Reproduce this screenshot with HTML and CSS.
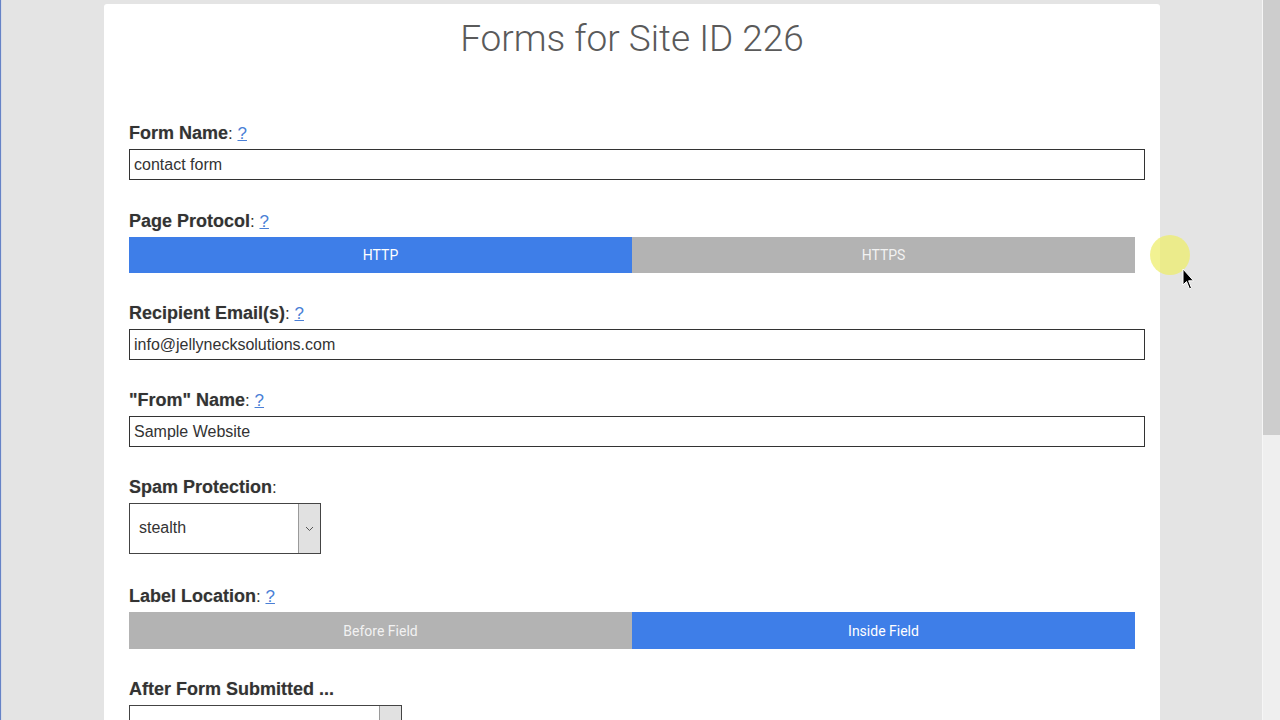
FILE: index.html
```html
<!DOCTYPE html>
<html>
  <head>
    <meta charset="utf-8">
    <title>Forms for Site ID 226</title>
    <link rel="stylesheet" href="styles.css">
  </head>
  <body>
    <div class="window">
      <div class="edge"></div>
      <main class="stage">
        <div class="card">
          <h1 class="title">Forms for Site ID 226</h1>

          <div class="field">
            <div class="label"><b>Form Name</b>: <a href="#">?</a></div>
            <input class="text" type="text" value="contact form">
          </div>

          <div class="field">
            <div class="label"><b>Page Protocol</b>: <a href="#">?</a></div>
            <div class="toggle">
              <span class="opt on">HTTP</span>
              <span class="opt">HTTPS</span>
            </div>
          </div>

          <div class="field">
            <div class="label"><b>Recipient Email(s)</b>: <a href="#">?</a></div>
            <input class="text" type="text" value="info@jellynecksolutions.com">
          </div>

          <div class="field">
            <div class="label"><b>"From" Name</b>: <a href="#">?</a></div>
            <input class="text" type="text" value="Sample Website">
          </div>

          <div class="field spam">
            <div class="label"><b>Spam Protection</b>:</div>
            <div class="select small">
              <span class="value">stealth</span>
              <span class="arrow">
                <svg width="9" height="6" viewBox="0 0 9 6"><path d="M1 1 L4.5 4.5 L8 1" fill="none" stroke="#555" stroke-width="1"/></svg>
              </span>
            </div>
          </div>

          <div class="field">
            <div class="label"><b>Label Location</b>: <a href="#">?</a></div>
            <div class="toggle tall">
              <span class="opt">Before Field</span>
              <span class="opt on">Inside Field</span>
            </div>
          </div>

          <div class="field">
            <div class="label"><b>After Form Submitted ...</b></div>
            <div class="select wide">
              <span class="value"></span>
              <span class="arrow"></span>
            </div>
          </div>
        </div>
      </main>
      <div class="scrollbar"><div class="thumb"></div></div>
    </div>

    <div class="glow"></div>
    <svg class="pointer" width="14" height="24" viewBox="0 0 14 24">
      <path d="M1 1 L1 17 L4.5 13.5 L7.5 21 L9.5 20 L6.6 12.8 L11.5 12.8 Z" fill="#000" stroke="#fff" stroke-width="1"/>
    </svg>
  </body>
</html>
```

FILE: styles.css
```css
* { box-sizing: border-box; }
html, body {
  margin: 0;
  height: 100%;
  overflow: hidden;
}
body {
  background: #e4e4e4;
  font-family: "Liberation Sans", Arial, sans-serif;
  color: #333;
}
.window {
  display: flex;
  height: 100vh;
}
.edge {
  width: 2px;
  background: #6683c6;
  border-right: 1px solid #d7dbe6;
}
.stage {
  flex: 1;
  display: flex;
  justify-content: center;
  padding-top: 4px;
}
.card {
  width: 1056px;
  background: #fff;
  border-radius: 3px 3px 0 0;
  padding: 13px 15px 0 25px;
  align-self: flex-start;
  min-height: 800px;
}
.title {
  margin: 0 0 62px -10px;
  font-family: Roboto, "Liberation Sans", sans-serif;
  font-weight: 300;
  font-size: 37px;
  line-height: 44px;
  text-align: center;
  color: #5a5a5a;
}
.field {
  margin-bottom: 30px;
}
.field:first-of-type {
  margin-bottom: 31px;
}
.field.spam {
  margin-bottom: 32px;
}
.label {
  height: 20px;
  font-size: 17px;
  line-height: 20px;
  margin-bottom: 6px;
  color: #333;
}
.label b {
  font-size: 18px;
  line-height: 20px;
  text-shadow: 0 0 1px rgba(0, 0, 0, 0.25);
}
.label a {
  color: #4a7fd6;
  text-decoration: underline;
}
.text {
  display: block;
  width: 100%;
  height: 31px;
  margin: 0;
  padding: 0 4px;
  border: 1px solid #333;
  border-radius: 0;
  font-family: "Liberation Sans", Arial, sans-serif;
  font-size: 16px;
  color: #333;
}
.toggle {
  display: flex;
  width: 1006px;
  height: 36px;
  font-family: Roboto, "Liberation Sans", sans-serif;
  font-size: 14px;
}
.toggle.tall {
  height: 37px;
}
.opt {
  flex: 1;
  display: flex;
  align-items: center;
  justify-content: center;
  background: #b3b3b3;
  color: #f2f2f2;
}
.opt.on {
  background: #3e7ee8;
  color: #fff;
}
.select {
  display: flex;
  height: 51px;
  border: 1px solid #444;
  font-size: 16px;
  color: #333;
}
.select.small {
  width: 192px;
}
.select.wide {
  width: 273px;
}
.select .value {
  flex: 1;
  padding-left: 9px;
  line-height: 47px;
}
.select .arrow {
  width: 22px;
  display: flex;
  align-items: center;
  justify-content: center;
  background: #e1e1e1;
  border-left: 1px solid #9a9a9a;
}
.scrollbar {
  width: 18px;
  background: #efefef;
  border-left: 1px solid #f6f6f6;
}
.thumb {
  height: 435px;
  background: #cdcdcd;
}
.glow {
  position: absolute;
  left: 1150px;
  top: 235px;
  width: 40px;
  height: 40px;
  border-radius: 50%;
  background: rgba(238, 238, 110, 0.75);
}
.pointer {
  position: absolute;
  left: 1182px;
  top: 268px;
}
```
